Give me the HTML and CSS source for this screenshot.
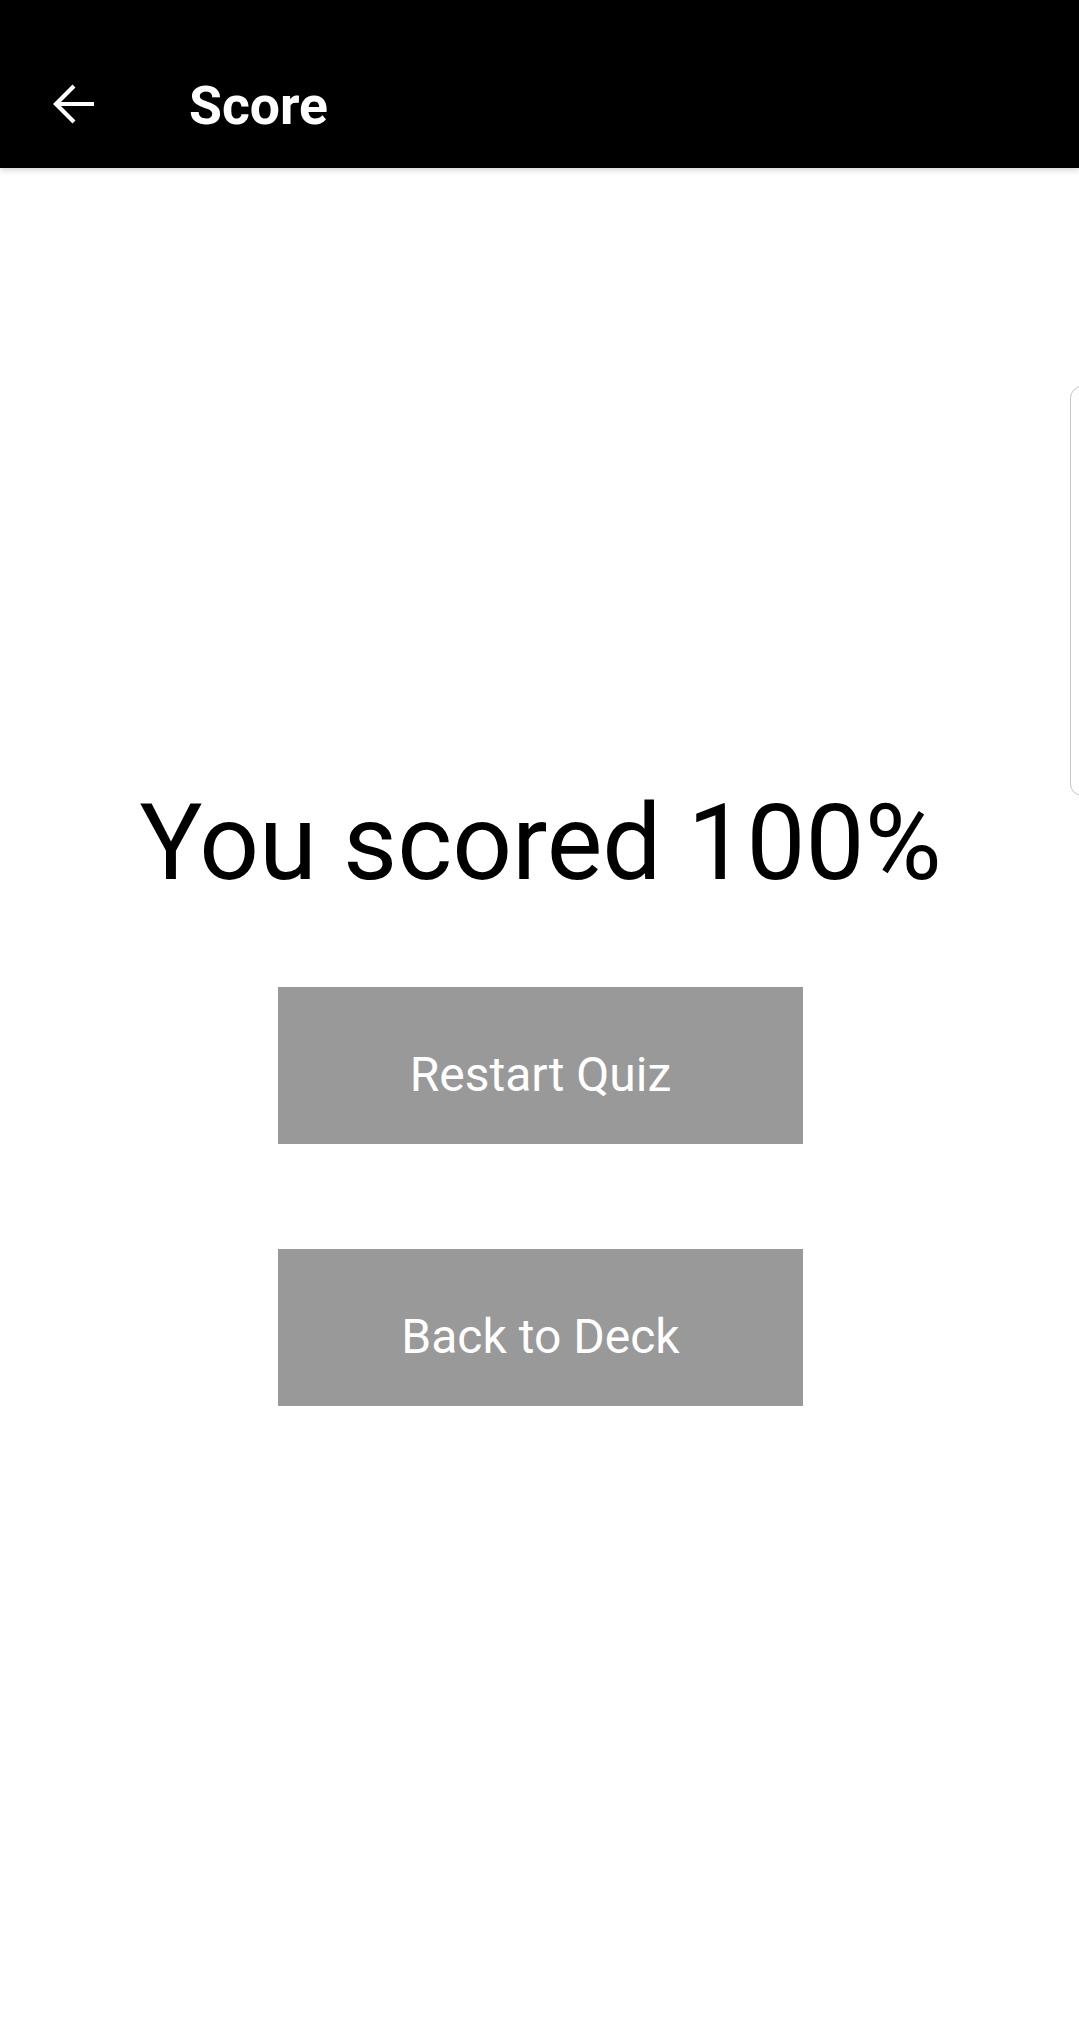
FILE: index.html
```html
<!DOCTYPE html>
<html>
<head>
<meta charset="utf-8">
<link rel="stylesheet" href="styles.css">
</head>
<body>
<header class="appbar">
  <div class="appbar-row">
    <svg class="back" viewBox="0 0 42 42" width="42" height="42">
      <path d="M41 21H4M21 3L3 21L21 39" fill="none" stroke="#fff" stroke-width="4.2" stroke-linecap="butt" stroke-linejoin="miter"/>
    </svg>
    <h1 class="title">Score</h1>
  </div>
</header>
<main class="content">
  <p class="score">You scored 100%</p>
  <div class="actions">
    <button class="btn">Restart Quiz</button>
    <button class="btn">Back to Deck</button>
  </div>
</main>
<div class="edge-handle"></div>
</body>
</html>
```

FILE: styles.css
```css
html, body {
  margin: 0;
  padding: 0;
  background: #ffffff;
  font-family: Roboto, "Noto Sans", "Liberation Sans", sans-serif;
}

body {
  width: 1079px;
  height: 2032px;
  overflow: hidden;
  position: relative;
}

.appbar {
  background: #000;
  height: 168px;
  box-sizing: border-box;
  padding-top: 40px;
  box-shadow: 0 2px 6px rgba(0, 0, 0, 0.18);
  position: relative;
  z-index: 1;
}

.appbar-row {
  height: 128px;
  display: flex;
  align-items: center;
  padding-left: 53px;
}

.back {
  display: block;
  flex: none;
}

.title {
  margin: 0 0 0 94px;
  color: #fff;
  font-size: 53.5px;
  font-weight: 700;
  line-height: 1;
  position: relative;
  top: 2px;
}

.content {
  display: flex;
  flex-direction: column;
  align-items: center;
  padding-top: 614px;
  padding-left: 2px;
}

.score {
  margin: 0;
  font-size: 105px;
  font-weight: 400;
  color: #000;
  line-height: normal;
}

.actions {
  margin-top: 82px;
  display: flex;
  flex-direction: column;
  gap: 105px;
}

.btn {
  width: 525px;
  height: 157px;
  border: none;
  background: #999999;
  color: #fff;
  font-family: Roboto, "Noto Sans", "Liberation Sans", sans-serif;
  font-size: 48px;
  font-weight: 400;
  padding: 18px 0 0 0;
  margin: 0;
  display: flex;
  align-items: center;
  justify-content: center;
}

.edge-handle {
  position: absolute;
  left: 1070px;
  top: 386px;
  width: 30px;
  height: 410px;
  border: 1.5px solid #c4c4c4;
  border-radius: 12px;
  box-sizing: border-box;
}
```
